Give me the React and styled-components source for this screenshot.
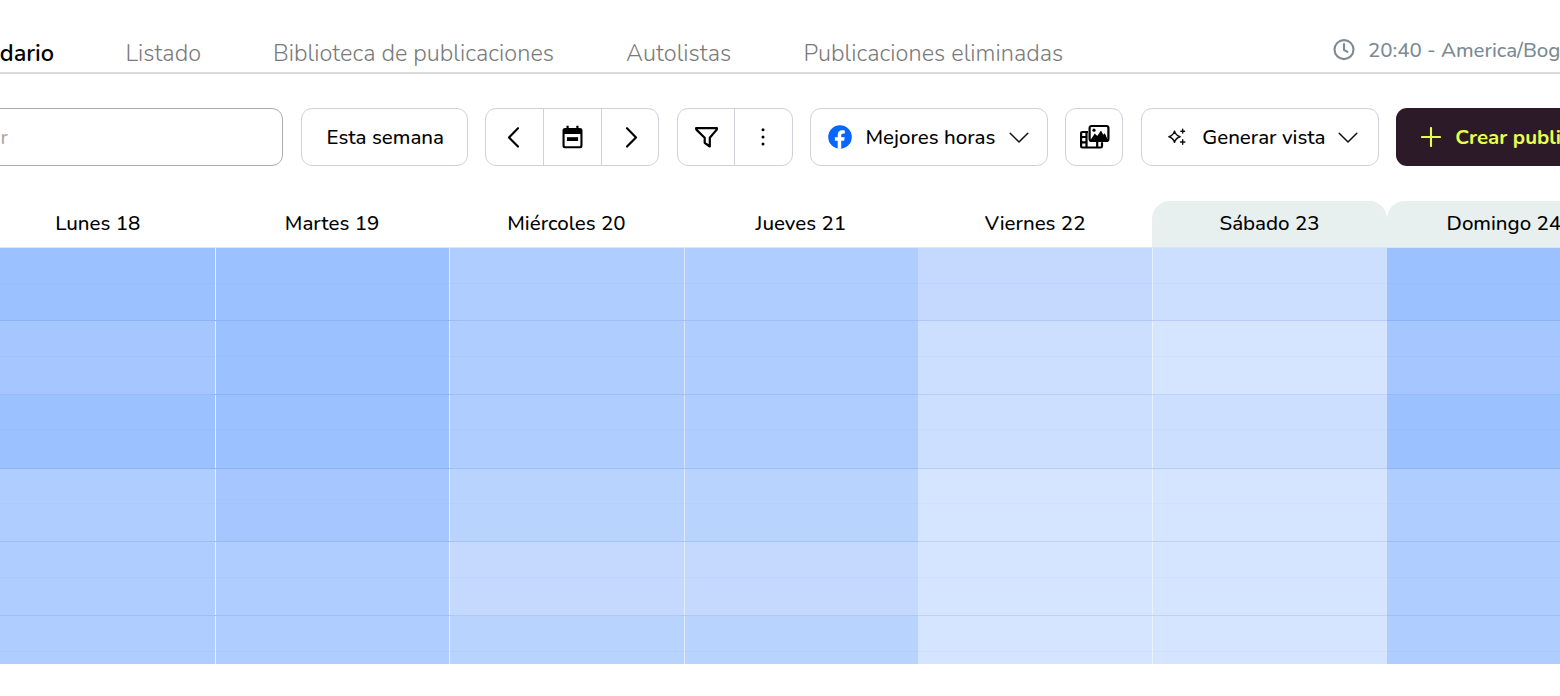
import React from "react";
import styled, { createGlobalStyle } from "styled-components";

const levels = ["#9bc1ff", "#a5c6ff", "#afcdff", "#b9d3ff", "#c5d9ff", "#cddfff", "#d6e5ff"];

const tabs = [
  { name: "Calendario", active: true, width: 118, gap: 71.5 },
  { name: "Listado", width: 76, gap: 71.5 },
  { name: "Biblioteca de publicaciones", width: 281, gap: 72 },
  { name: "Autolistas", width: 105, gap: 72.500 },
  { name: "Publicaciones eliminadas", width: 260, gap: 0 },
];

const days = [
  { name: "Lunes 18", hours: [0, 1, 0, 2, 2, 2] },
  { name: "Martes 19", hours: [0, 0, 0, 1, 2, 2], line: 0.75 },
  { name: "Miércoles 20", hours: [2, 2, 2, 3, 4, 3], line: 0.65 },
  { name: "Jueves 21", hours: [2, 2, 2, 3, 4, 3], line: 0.5 },
  { name: "Viernes 22", hours: [4, 5, 5, 6, 6, 6], line: 0 },
  { name: "Sábado 23", hours: [5, 6, 5, 6, 6, 6], line: 0.5, weekend: true },
  { name: "Domingo 24", hours: [0, 1, 0, 2, 2, 2], line: 0, weekend: true },
];

const ClockIcon = () => (
  <svg width="22" height="22" viewBox="0 0 22 22" fill="none" stroke="#7b8a93" strokeWidth="2.1" strokeLinecap="round">
    <circle cx="11" cy="10.6" r="9.5" />
    <path d="M11 5v5.900l3.400 1.900" />
  </svg>
);

const ArrowIcon = ({ right }) => (
  <svg width="22" height="22" viewBox="0 0 22 22" fill="none" stroke="#000" strokeWidth="2.1" strokeLinecap="round" strokeLinejoin="round">
    <path d={right ? "M8 2.200l9 9.200-9 9.200" : "M14 2.200l-9 9.200 9 9.200"} />
  </svg>
);

const CalendarIcon = () => (
  <svg width="22" height="24" viewBox="-0.5 0 22 24">
    <path fill="#000" fillRule="evenodd" d="M5 .8h2.2V3h7.6V.8H17V3h1.5A2.5 2.5 0 0 1 21 5.500v15.200a2.500 2.500 0 0 1-2.500 2.500h-15A2.500 2.500 0 0 1 1 20.700V5.500A2.500 2.500 0 0 1 3.500 3H5zM3.100 9.100v11.100c0 .6.4 1 1 1h13.800c.6 0 1-.4 1-1V9.100z" />
    <path fill="#000" d="M5.400 12.200h11.200v3.800H5.400z" />
  </svg>
);

const FilterIcon = () => (
  <svg width="24" height="22" viewBox="-0.5 0 24 22" fill="none" stroke="#000" strokeWidth="2.2" strokeLinejoin="round">
    <path d="M1.600 2.200h20.800c.2.900-.2 1.600-.8 2.200l-6.300 7.300v8.800l-5.100-3.700v-5.100L2.600 4.400c-.7-.7-1.100-1.400-1-2.200z" />
  </svg>
);

const DotsIcon = () => (
  <svg width="6" height="20" viewBox="0 0 6 20" fill="#000">
    <circle cx="3" cy="2.700" r="1.500" />
    <circle cx="3" cy="9.900" r="1.500" />
    <circle cx="3" cy="17.100" r="1.500" />
  </svg>
);

const FacebookIcon = () => (
  <svg width="24" height="24" viewBox="0 0 24 24">
    <circle cx="12" cy="12" r="11.800" fill="#0866ff" />
    <path fill="#fff" d="M9.700 24v-8.200H6.900v-3.600h2.800v-1.700c0-3.700 1.500-5.300 4.900-5.300.7 0 1.700.1 2.200.2v3.200c-.3 0-.8-.1-1.300-.1-1.700 0-2.300.7-2.300 2.300v1.400h3.500l-.6 3.600h-2.900v8z" />
  </svg>
);

const MediaIcon = () => (
  <svg width="31" height="26" viewBox="0 0 31 26" fill="none" stroke="#000" strokeWidth="2.200" strokeLinejoin="round">
    <path d="M9 8H3.400c-.8 0-1.300.5-1.300 1.300v12.900c0 .8.500 1.300 1.300 1.300h18.200c.8 0 1.400-.5 1.400-1.300v-4M7.500 8v15.500M2 13h6M2 18.300h6M18.200 18v5.500" />
    <rect x="10.600" y="2" width="18.800" height="15" rx="2" />
    <circle cx="15" cy="6.200" r="1.600" fill="#000" stroke="none" />
    <path fill="#000" stroke="none" d="M11.500 16l4.300-6.500 2.500 2.500 3.700-5.400 2.300 4.100 1.500-1.400 3 6.700z" />
  </svg>
);

const ChevronIcon = () => (
  <svg width="20" height="12" viewBox="0 0 20 12" fill="none" stroke="#111" strokeWidth="1.500" strokeLinecap="round" strokeLinejoin="round">
    <path d="M1.200 2.200L10 11l8.800-8.800" />
  </svg>
);

const SparkIcon = () => (
  <svg width="20" height="18" viewBox="0 0 20 18" fill="none" stroke="#111" strokeLinejoin="round" strokeLinecap="round">
    <path strokeWidth="1.500" d="M7.500 3.100c.9 3.300 2 4.500 5.600 5.600-3.600 1.100-4.700 2.300-5.600 5.600-.9-3.300-2-4.500-5.600-5.600 3.600-1.100 4.700-2.300 5.600-5.600z" />
    <path strokeWidth="1.400" d="M15.700 1.300v3.800M13.800 3.200h3.800M15.700 11.800v4.400M13.500 14h4.400" />
  </svg>
);

const PlusIcon = () => (
  <svg width="20" height="20" viewBox="0 0 20 20" fill="none" stroke="#e6ff4f" strokeWidth="2.1" strokeLinecap="round">
    <path d="M10 1v18M1 10h18" />
  </svg>
);

const App = () => {
  return (
    <Page>
      <GlobalStyle />
      <Header>
        <Tabs>
          {tabs.map(({ name, active, width, gap }) => (
            <Tab key={name} $active={active} $width={width} $gap={gap}>
              {name}
            </Tab>
          ))}
        </Tabs>
        <Clock>
          <ClockIcon />
          <span>20:40 - America/Bogota</span>
        </Clock>
      </Header>

      <Toolbar>
        <Search placeholder="Buscar" />
        <Button $width={167}>
          <Label $left={2}>Esta semana</Label>
        </Button>
        <Group $width={174}>
          <GroupItem><ArrowIcon /></GroupItem>
          <GroupItem><CalendarIcon /></GroupItem>
          <GroupItem><ArrowIcon right /></GroupItem>
        </Group>
        <Group $width={116}>
          <GroupItem><FilterIcon /></GroupItem>
          <GroupItem><DotsIcon /></GroupItem>
        </Group>
        <Button $width={238}>
          <FacebookIcon />
          <Label $width={129} $left={13} $right={15}>Mejores horas</Label>
          <ChevronIcon />
        </Button>
        <Button $width={58}>
          <MediaIcon />
        </Button>
        <Button $width={238} $inset={6}>
          <SparkIcon />
          <Label $width={122} $left={15} $right={14}>Generar vista</Label>
          <ChevronIcon />
        </Button>
        <CreateButton>
          <PlusIcon />
          <span>Crear publicación</span>
        </CreateButton>
      </Toolbar>

      <Calendar>
        {days.map(({ name, hours, line, weekend }) => (
          <Day key={name}>
            <DayName $weekend={weekend}>{name}</DayName>
            <Hours>
              {hours.map((level, i) => (
                <Hour key={i} $level={level} $line={line}>
                  <HalfHour />
                </Hour>
              ))}
            </Hours>
          </Day>
        ))}
      </Calendar>
    </Page>
  );
};

export default App;

const GlobalStyle = createGlobalStyle`
  * {
    box-sizing: border-box;
  }
  body {
    margin: 0;
    background: #fff;
    font-family: "Nunito", "Lato", "Open Sans", sans-serif;
    color: #000;
  }
  svg {
    flex: none;
    display: block;
  }
`;

const Page = styled.main`
  width: 1560px;
  height: 696px;
  overflow: hidden;
  background: #fff;
`;

const Header = styled.header`
  height: 74px;
  padding-top: 33px;
  border-bottom: 2px solid #d9d9d9;
  display: flex;
  justify-content: space-between;
`;

const Tabs = styled.nav`
  display: flex;
  margin-left: -64px;
`;

const Tab = styled.a`
  flex: none;
  width: ${({ $width }) => $width}px;
  margin-right: ${({ $gap }) => $gap}px;
  font-size: 23.5px;
  line-height: 40px;
  font-weight: ${({ $active }) => ($active ? 600 : 360)};
  color: ${({ $active }) => ($active ? "#000" : "#7a7a7a")};
  letter-spacing: ${({ $active }) => ($active ? 0 : 0.02)}px;
  white-space: nowrap;
  text-align: ${({ $active }) => ($active ? "right" : "left")};
`;

const Clock = styled.div`
  flex: none;
  width: 227px;
  height: 34px;
  display: flex;
  align-items: center;
  gap: 13px;
  color: #7b8a93;
  font-size: 20.5px;
  font-weight: 500;
  letter-spacing: -0.05px;
  white-space: nowrap;
`;

const Toolbar = styled.div`
  display: flex;
  gap: 17.4px;
  margin: 34px 0 0 -64px;
`;

const Search = styled.input`
  flex: none;
  width: 347.4px;
  height: 58px;
  padding: 0 0 0 8px;
  border: 1px solid #ababab;
  border-radius: 11px;
  font: 400 20.5px "Nunito", "Lato", sans-serif;
  outline: none;
  &::placeholder {
    color: #a3a3a3;
  }
`;

const Button = styled.button`
  flex: none;
  width: ${({ $width }) => $width}px;
  height: 58px;
  padding: 0 0 0 ${({ $inset = 0 }) => $inset}px;
  display: flex;
  align-items: center;
  justify-content: center;
  border: 1px solid #d0d0da;
  border-radius: 11px;
  background: #fff;
  color: #000;
  font: 500 20.5px "Nunito", "Lato", sans-serif;
`;

const Label = styled.span`
  width: ${({ $width }) => ($width ? `${$width}px` : "auto")};
  margin: 0 ${({ $right = 0 }) => $right}px 0 ${({ $left = 0 }) => $left}px;
  white-space: nowrap;
  text-align: left;
`;

const Group = styled.div`
  flex: none;
  display: flex;
  width: ${({ $width }) => $width}px;
  height: 58px;
  border: 1px solid #d0d0da;
  border-radius: 11px;
`;

const GroupItem = styled.div`
  flex: 1;
  display: flex;
  align-items: center;
  justify-content: center;
  & + & {
    border-left: 1px solid #d0d0da;
  }
`;

const CreateButton = styled(Button)`
  width: 240px;
  padding-left: 25px;
  gap: 14px;
  justify-content: flex-start;
  border: none;
  background: #2c1a28;
  color: #e6ff4f;
  font-weight: 700;
  white-space: nowrap;
`;

const Calendar = styled.section`
  display: flex;
  margin: 35px 0 0 -19.400px;
`;

const Day = styled.div`
  flex: none;
  width: 234.35px;
`;

const DayName = styled.div`
  height: 46px;
  line-height: 44px;
  text-align: center;
  font-size: 20.5px;
  font-weight: 500;
  border-radius: 18px 18px 0 0;
  background: ${({ $weekend }) => ($weekend ? "#e7efef" : "transparent")};
`;

const Hours = styled.div`
  height: 417px;
  overflow: hidden;
  border-top: 1px solid #d9e6f8;
`;

const Hour = styled.div`
  height: 73.75px;
  background: ${({ $level }) => levels[$level]};
  border-bottom: 1px solid rgba(60, 100, 190, 0.14);
  box-shadow: inset 1px 0 rgba(255, 255, 255, ${({ $line = 0 }) => $line});

  &:first-child {
    height: 73px;
  }
`;

const HalfHour = styled.div`
  height: 35.5px;
  border-bottom: 1px solid rgba(60, 100, 190, 0.035);
`;
